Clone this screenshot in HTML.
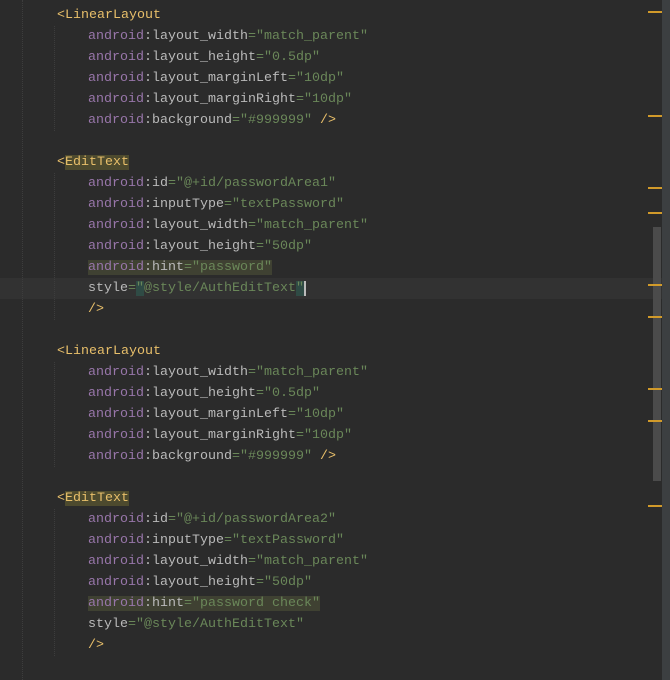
<!DOCTYPE html>
<html><head><meta charset="utf-8"><style>
body{margin:0;width:670px;height:680px;background:#2b2b2b;overflow:hidden;position:relative;font-family:"Liberation Mono",monospace;font-size:13.33px}
.l{position:absolute;left:0;height:21px;line-height:21px;white-space:pre;color:#bababa}
.t{color:#e8bf6a}.a{color:#9876aa}.v{color:#6a8759}
.g{position:absolute;width:0;border-left:1px dotted #3d3d3d}
.m{position:absolute;left:648px;width:14px;height:2px;background:#d19a2a}
.eh{background:#4d4a2e}.hh{background:#3f4132}
</style></head><body>
<div style="position:absolute;left:0;top:278px;width:662px;height:21px;background:#323232"></div>
<div style="position:absolute;left:662px;top:0;width:8px;height:680px;background:#3c3f41"></div>
<div style="position:absolute;left:653px;top:227px;width:8px;height:254px;background:#4b4b4b"></div>
<div class="g" style="left:22px;top:0;height:680px"></div>
<div class="g" style="left:54px;top:26px;height:105px"></div>
<div class="g" style="left:54px;top:173px;height:147px"></div>
<div class="g" style="left:54px;top:362px;height:105px"></div>
<div class="g" style="left:54px;top:509px;height:147px"></div>
<div class="m" style="top:11px"></div><div class="m" style="top:115px"></div><div class="m" style="top:187px"></div><div class="m" style="top:212px"></div><div class="m" style="top:284px"></div><div class="m" style="top:316px"></div><div class="m" style="top:388px"></div><div class="m" style="top:420px"></div><div class="m" style="top:505px"></div>
<div id="c"></div>
<div class="l" style="top:5px;left:57px"><span class="t">&lt;LinearLayout</span></div>
<div class="l" style="top:26px;left:88px"><span class="a">android</span>:layout_width<span class="v">="match_parent"</span></div>
<div class="l" style="top:47px;left:88px"><span class="a">android</span>:layout_height<span class="v">="0.5dp"</span></div>
<div class="l" style="top:68px;left:88px"><span class="a">android</span>:layout_marginLeft<span class="v">="10dp"</span></div>
<div class="l" style="top:89px;left:88px"><span class="a">android</span>:layout_marginRight<span class="v">="10dp"</span></div>
<div class="l" style="top:110px;left:88px"><span class="a">android</span>:background<span class="v">="#999999"</span> <span class="t">/&gt;</span></div>
<div class="l" style="top:152px;left:57px"><span class="t">&lt;<span class="eh">EditText</span></span></div>
<div class="l" style="top:173px;left:88px"><span class="a">android</span>:id<span class="v">="@+id/passwordArea1"</span></div>
<div class="l" style="top:194px;left:88px"><span class="a">android</span>:inputType<span class="v">="textPassword"</span></div>
<div class="l" style="top:215px;left:88px"><span class="a">android</span>:layout_width<span class="v">="match_parent"</span></div>
<div class="l" style="top:236px;left:88px"><span class="a">android</span>:layout_height<span class="v">="50dp"</span></div>
<div class="l" style="top:257px;left:88px"><span class="hh"><span class="a">android</span>:hint<span class="v">="password"</span></span></div>
<div class="l" style="top:278px;left:88px">style<span class="v">=<span style="background:#2f4b45">"</span>@style/AuthEditText<span style="background:#2f4b45">"</span></span><span style="border-left:2px solid #bbb"></span></div>
<div class="l" style="top:299px;left:88px"><span class="t">/&gt;</span></div>
<div class="l" style="top:341px;left:57px"><span class="t">&lt;LinearLayout</span></div>
<div class="l" style="top:362px;left:88px"><span class="a">android</span>:layout_width<span class="v">="match_parent"</span></div>
<div class="l" style="top:383px;left:88px"><span class="a">android</span>:layout_height<span class="v">="0.5dp"</span></div>
<div class="l" style="top:404px;left:88px"><span class="a">android</span>:layout_marginLeft<span class="v">="10dp"</span></div>
<div class="l" style="top:425px;left:88px"><span class="a">android</span>:layout_marginRight<span class="v">="10dp"</span></div>
<div class="l" style="top:446px;left:88px"><span class="a">android</span>:background<span class="v">="#999999"</span> <span class="t">/&gt;</span></div>
<div class="l" style="top:488px;left:57px"><span class="t">&lt;<span class="eh">EditText</span></span></div>
<div class="l" style="top:509px;left:88px"><span class="a">android</span>:id<span class="v">="@+id/passwordArea2"</span></div>
<div class="l" style="top:530px;left:88px"><span class="a">android</span>:inputType<span class="v">="textPassword"</span></div>
<div class="l" style="top:551px;left:88px"><span class="a">android</span>:layout_width<span class="v">="match_parent"</span></div>
<div class="l" style="top:572px;left:88px"><span class="a">android</span>:layout_height<span class="v">="50dp"</span></div>
<div class="l" style="top:593px;left:88px"><span class="hh"><span class="a">android</span>:hint<span class="v">="password check"</span></span></div>
<div class="l" style="top:614px;left:88px">style<span class="v">="@style/AuthEditText"</span></div>
<div class="l" style="top:635px;left:88px"><span class="t">/&gt;</span></div>
</body></html>
